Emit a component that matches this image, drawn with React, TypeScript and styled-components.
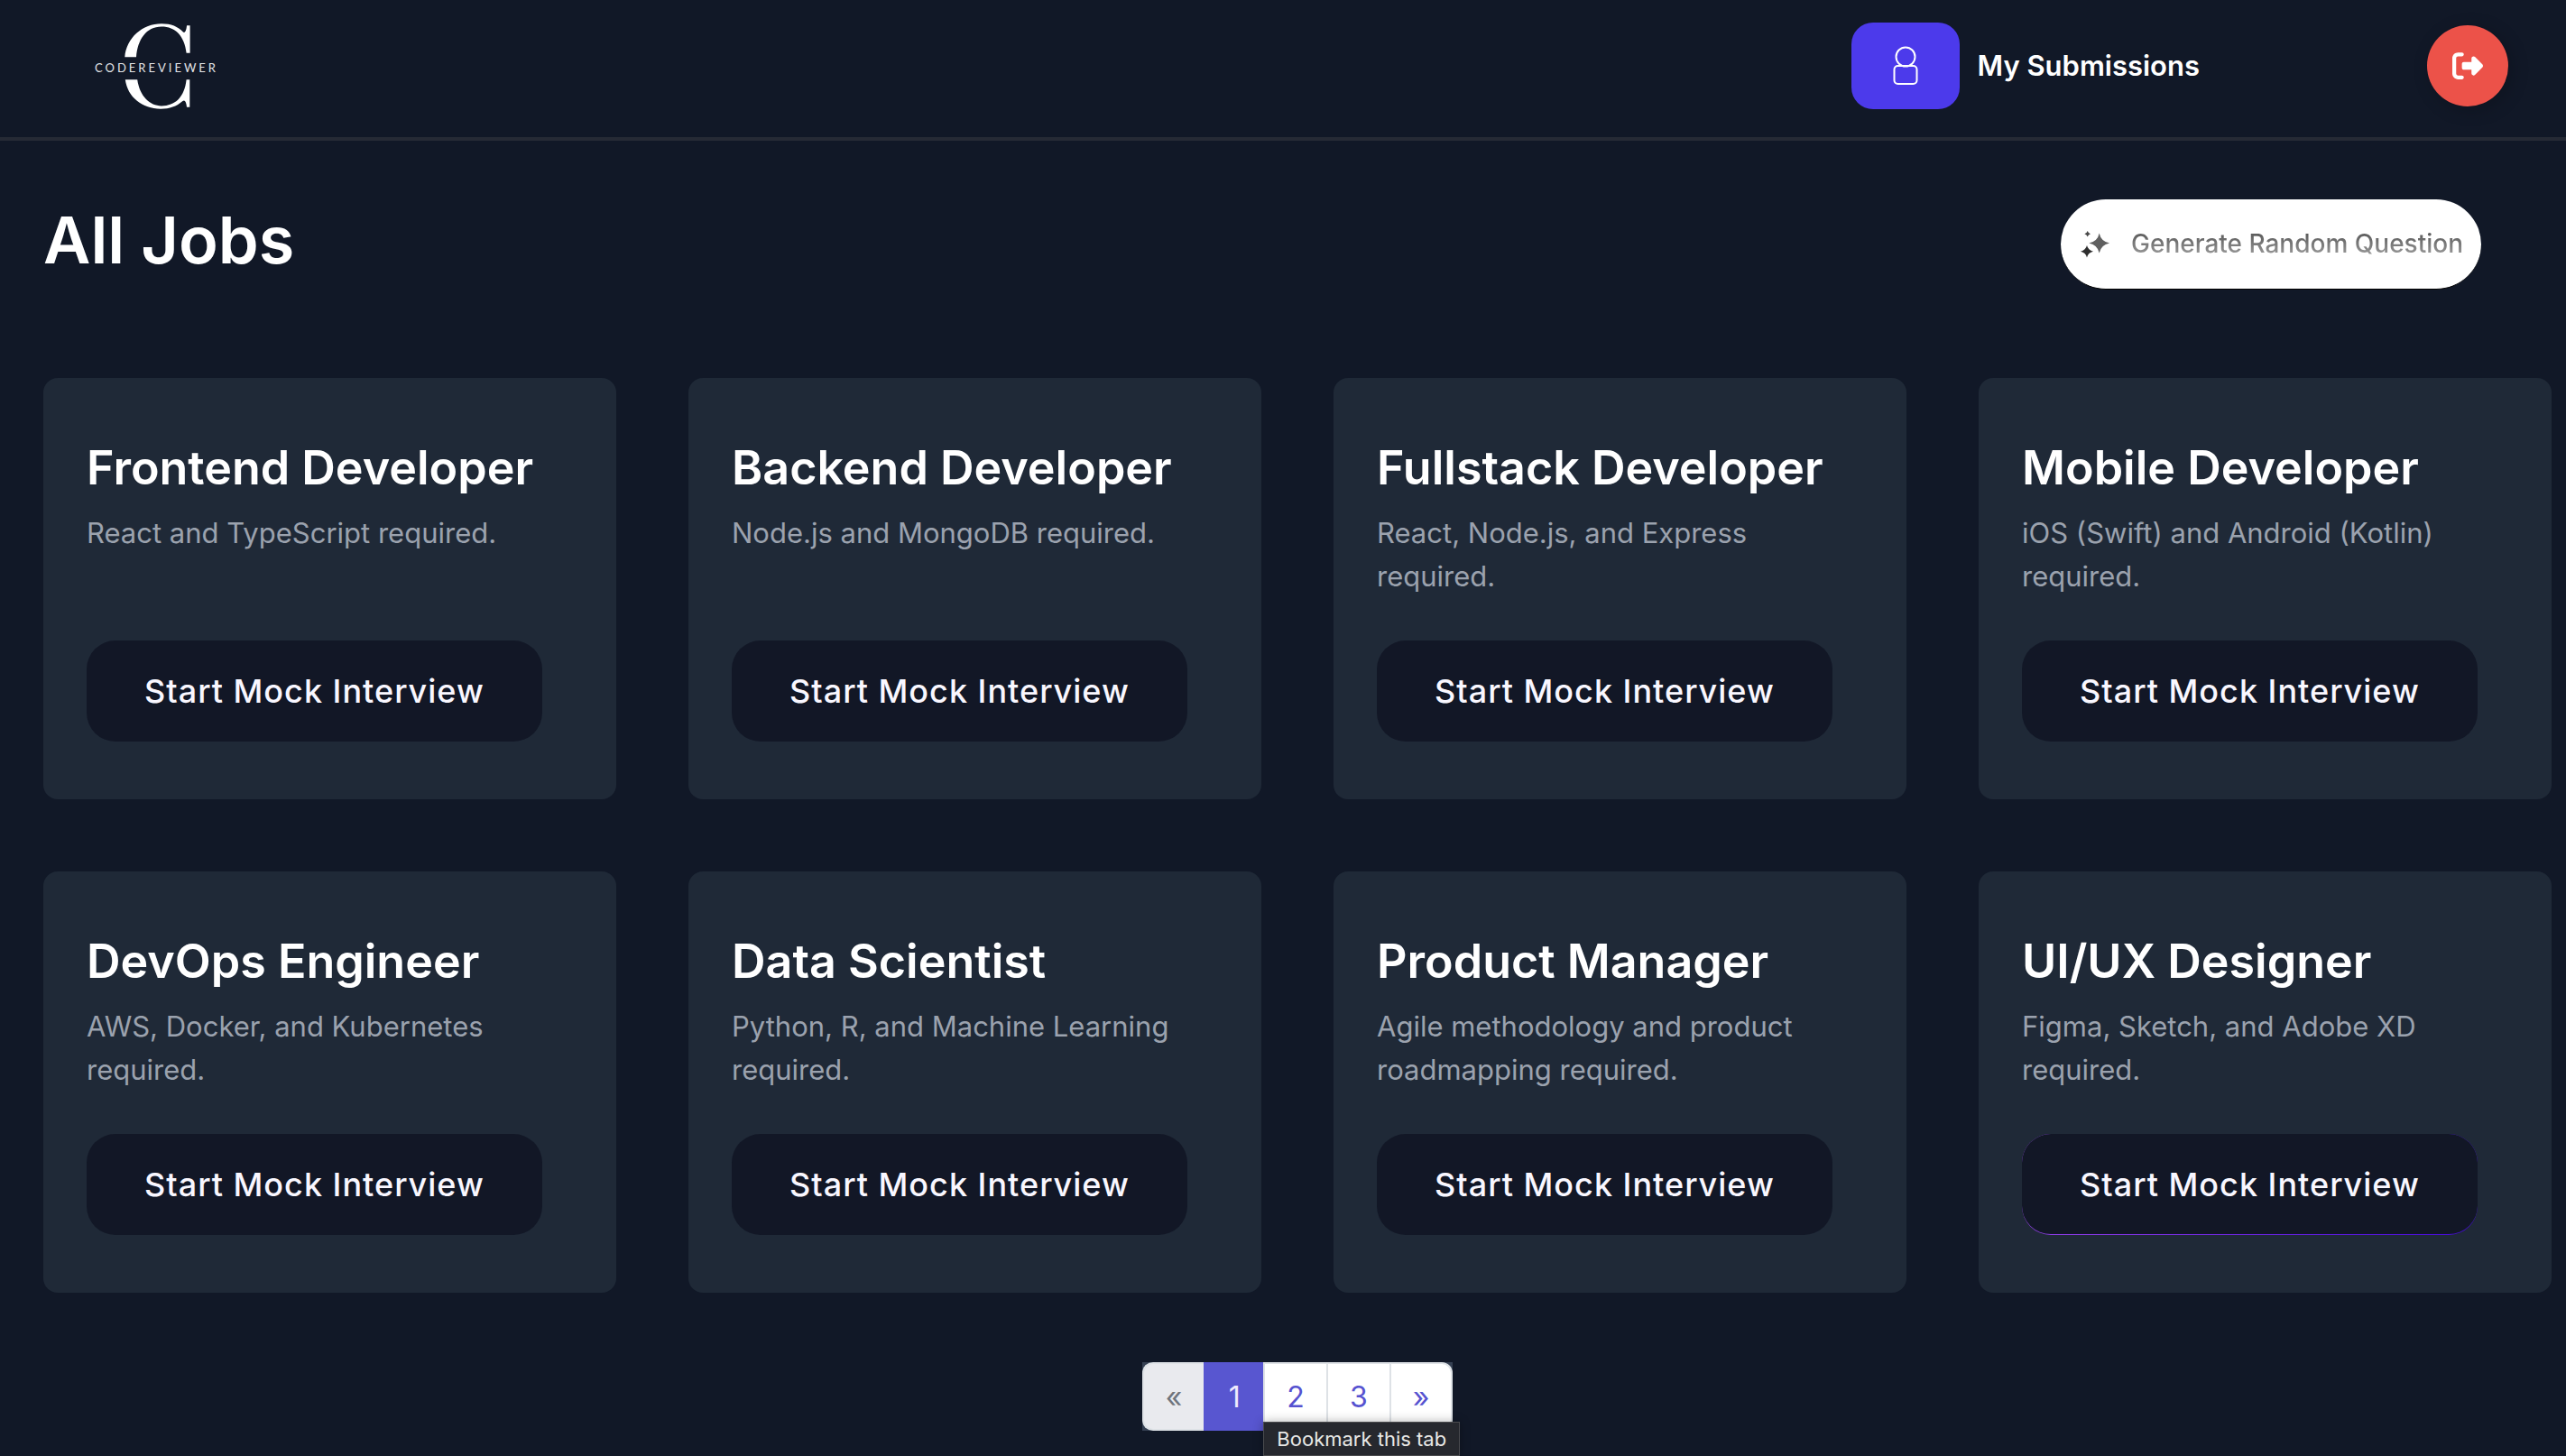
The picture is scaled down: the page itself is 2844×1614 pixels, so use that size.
import React from "react";
import styled, { createGlobalStyle } from "styled-components";

const GlobalStyle = createGlobalStyle`
  *, *::before, *::after { box-sizing: border-box; }
  html, body { margin: 0; background: #111827; }
  body {
    color: #ffffff;
    font-family: Inter, "Liberation Sans", sans-serif;
    font-size: 31px;
    line-height: 48px;
  }
  button { font-family: inherit; cursor: pointer; }
  h1, h2, p, ul { margin: 0; padding: 0; }
`;

const Page = styled.div`
  min-height: 100vh;
  overflow: hidden;
`;

const Header = styled.header`
  display: flex;
  align-items: center;
  justify-content: space-between;
  padding: 24px 64px 30px 100px;
  border-bottom: 4px solid #262a35;
`;

const LogoLink = styled.a`
  display: block;
  line-height: 0;
`;

const LogoWord = styled.text`
  fill: #e3e5e8;
  font-family: Lato, sans-serif;
  font-size: 13px;
  letter-spacing: 3px;
`;

const HeaderActions = styled.nav`
  display: flex;
  align-items: center;
  gap: 252px;
`;

const SubmissionsLink = styled.a`
  display: flex;
  align-items: center;
  gap: 20px;
  color: #ffffff;
  font-weight: 600;
  text-decoration: none;
`;

const UserBadge = styled.span`
  display: grid;
  place-items: center;
  width: 120px;
  height: 96px;
  border-radius: 24px;
  background: #4c3aeb;
`;

const LogoutButton = styled.button`
  display: grid;
  place-items: center;
  width: 90px;
  height: 90px;
  padding: 0;
  border: 0;
  border-radius: 50%;
  background: #ec5249;
  box-shadow: 4px 4px 20px rgba(0, 0, 0, 0.2);
`;

const Main = styled.main`
  padding: 65px 16px 28px 48px;
`;

const TitleRow = styled.div`
  display: flex;
  align-items: flex-start;
  justify-content: space-between;
  padding-right: 78px;
`;

const PageTitle = styled.h1`
  font-size: 72px;
  font-weight: 600;
  line-height: 90px;
`;

const GenerateButton = styled.button`
  display: flex;
  align-items: center;
  gap: 22px;
  height: 100px;
  padding: 0 20px 2px;
  border: 0;
  border-bottom: 1px solid #000000;
  border-radius: 50px;
  background: #ffffff;
  font-size: 28px;
  font-weight: 500;
`;

const GenerateLabel = styled.span`
  background: linear-gradient(#5c5c5c 20%, #949494 80%);
  background-clip: text;
  color: transparent;
  line-height: 36px;
`;

const JobGrid = styled.section`
  display: grid;
  grid-template-columns: repeat(4, minmax(0, 1fr));
  gap: 80px;
  margin-top: 98px;
`;

const Card = styled.article`
  display: flex;
  flex-direction: column;
  align-items: flex-start;
  padding: 64px 48px;
  border-radius: 16px;
  background: #1f2937;
`;

const JobTitle = styled.h2`
  font-size: 52px;
  font-weight: 600;
  line-height: 72px;
  white-space: nowrap;
`;

const JobText = styled.p`
  min-height: 96px;
  margin: 12px 0 47px;
  color: #9ba2ae;
`;

const StartButton = styled.button<{ $glow?: boolean }>`
  height: 112px;
  padding: 0 64px;
  border: 0;
  border-radius: 32px;
  background: ${(p) =>
    p.$glow
      ? "linear-gradient(#121726, #121726) padding-box, linear-gradient(90deg, #9440e8, #4409dc) border-box"
      : "#121726"};
  ${(p) => p.$glow && "border-bottom: 1px solid transparent;"}
  color: #f9f7ff;
  font-size: 36px;
  font-weight: 500;
  letter-spacing: 1px;
  white-space: nowrap;
`;

const Pager = styled.nav`
  display: flex;
  justify-content: center;
  margin-top: 77px;
`;

const PageList = styled.ul`
  display: flex;
  list-style: none;
  background: #364153;
`;

const PageItem = styled.li`
  position: relative;
  display: flex;

  &:first-child > button { border-radius: 12px 0 0 12px; }
  &:last-child > button { border-radius: 0 12px 12px 0; border-right-width: 2px; }
`;

const PageButton = styled.button<{ $active?: boolean }>`
  min-width: 66px;
  height: 76px;
  padding: 0 24px;
  border: 2px solid ${(p) => (p.$active ? "#5856d0" : "#dee2e6")};
  border-right-width: 0;
  background: ${(p) => (p.$active ? "#5856d0" : "#ffffff")};
  color: ${(p) => (p.$active ? "#efeafd" : "#5652d0")};
  font-size: 32px;

  &:disabled { background: #e9eaee; color: #70757d; cursor: default; }
`;

const Tooltip = styled.span`
  position: absolute;
  top: 66px;
  left: 0;
  z-index: 1;
  padding: 0 14px;
  border: 1px solid #4a4b4e;
  background: #26282e;
  box-shadow: 0 0 12px rgba(0, 0, 0, 0.3);
  color: #e8e8e6;
  font-size: 22px;
  line-height: 36px;
  white-space: nowrap;
`;

function Logo() {
  return (
    <svg width="150" height="98" viewBox="100 24 150 98" aria-label="CodeReviewer" role="img">
      <g fill="#ffffff">
        <path d="M138.3 63.3C140 42 158 26.3 179 26.3C190 26.3 197 29.5 203 35.5C205 37 206.5 34 207 28.3H210.6V58.7H206.6C204.5 40 194.5 29.5 179 29.5C162 29.5 152.5 44 151 63.3Z" />
        <path d="M138.8 88.3H152.2C155 107 166 117.4 179 117.4C194 117.4 204.5 108 206.6 88.3H210.3V118.7H207C206.5 113.5 205 110 202.5 112C195.5 118 188 120.7 178 120.7C158 120.7 141.5 108 138.8 88.3Z" />
      </g>
      <LogoWord x="105" y="80">CODEREVIEWER</LogoWord>
    </svg>
  );
}

function UserIcon() {
  return (
    <svg width="28" height="44" viewBox="0 0 28 44" fill="none" stroke="#ffffff" strokeWidth="2" aria-hidden="true">
      <circle cx="14" cy="12" r="10.5" />
      <rect x="1.5" y="22" width="25" height="20" rx="4" />
    </svg>
  );
}

function LogoutIcon() {
  return (
    <svg width="34" height="34" viewBox="0 0 512 512" fill="#ffffff" aria-hidden="true">
      <path d="M377.9 105.9L500.7 228.7c7.2 7.2 11.3 17.1 11.3 27.3s-4.1 20.1-11.3 27.3L377.9 406.1c-6.4 6.4-15 9.9-24 9.9c-18.7 0-33.9-15.2-33.9-33.9l0-62.1-128 0c-17.7 0-32-14.3-32-32l0-64c0-17.7 14.3-32 32-32l128 0 0-62.1c0-18.7 15.2-33.9 33.9-33.9c9 0 17.6 3.6 24 9.9zM160 96L96 96c-17.7 0-32 14.3-32 32l0 256c0 17.7 14.3 32 32 32l64 0c17.7 0 32 14.3 32 32s-14.3 32-32 32l-64 0c-53 0-96-43-96-96L0 128C0 75 43 32 96 32l64 0c17.7 0 32 14.3 32 32s-14.3 32-32 32z" />
    </svg>
  );
}

function SparkleIcon() {
  return (
    <svg width="36" height="36" viewBox="2304 252 36 36" aria-hidden="true">
      <path fill="#606060" d="M2326.7 258.5Q2328.500 267.500 2338 269.500Q2328.500 271.500 2326.700 280.500Q2324.900 271.500 2315.400 269.500Q2324.900 267.500 2326.700 258.500Z" />
      <path fill="#2e2e2e" d="M2313 272Q2314.300 277.400 2320 278.700Q2314.300 280 2313 285.400Q2311.700 280 2306 278.700Q2311.700 277.400 2313 272Z" />
      <path fill="#484848" d="M2313.700 256Q2314.500 258.500 2317 259.300Q2314.500 260.100 2313.700 262.600Q2312.900 260.100 2310.400 259.300Q2312.900 258.500 2313.700 256Z" />
    </svg>
  );
}

const jobs = [
  { title: "Frontend Developer", text: "React and TypeScript required." },
  { title: "Backend Developer", text: "Node.js and MongoDB required." },
  { title: "Fullstack Developer", text: "React, Node.js, and Express required." },
  { title: "Mobile Developer", text: "iOS (Swift) and Android (Kotlin) required." },
  { title: "DevOps Engineer", text: "AWS, Docker, and Kubernetes required." },
  { title: "Data Scientist", text: "Python, R, and Machine Learning required." },
  { title: "Product Manager", text: "Agile methodology and product roadmapping required." },
  { title: "UI/UX Designer", text: "Figma, Sketch, and Adobe XD required." },
];

export default function App() {
  return (
    <Page>
      <GlobalStyle />
      <Header>
        <LogoLink href="#home">
          <Logo />
        </LogoLink>
        <HeaderActions>
          <SubmissionsLink href="#submissions">
            <UserBadge>
              <UserIcon />
            </UserBadge>
            My Submissions
          </SubmissionsLink>
          <LogoutButton type="button" aria-label="Log out">
            <LogoutIcon />
          </LogoutButton>
        </HeaderActions>
      </Header>
      <Main>
        <TitleRow>
          <PageTitle>All Jobs</PageTitle>
          <GenerateButton type="button">
            <SparkleIcon />
            <GenerateLabel>Generate Random Question</GenerateLabel>
          </GenerateButton>
        </TitleRow>
        <JobGrid>
          {jobs.map((job, i) => (
            <Card key={job.title}>
              <JobTitle>{job.title}</JobTitle>
              <JobText>{job.text}</JobText>
              <StartButton type="button" $glow={i === jobs.length - 1}>
                Start Mock Interview
              </StartButton>
            </Card>
          ))}
        </JobGrid>
        <Pager aria-label="Pagination">
          <PageList>
            <PageItem>
              <PageButton type="button" disabled>«</PageButton>
            </PageItem>
            <PageItem>
              <PageButton type="button" $active aria-current="page">1</PageButton>
            </PageItem>
            <PageItem>
              <PageButton type="button">2</PageButton>
              <Tooltip role="tooltip">Bookmark this tab</Tooltip>
            </PageItem>
            <PageItem>
              <PageButton type="button">3</PageButton>
            </PageItem>
            <PageItem>
              <PageButton type="button">»</PageButton>
            </PageItem>
          </PageList>
        </Pager>
      </Main>
    </Page>
  );
}
